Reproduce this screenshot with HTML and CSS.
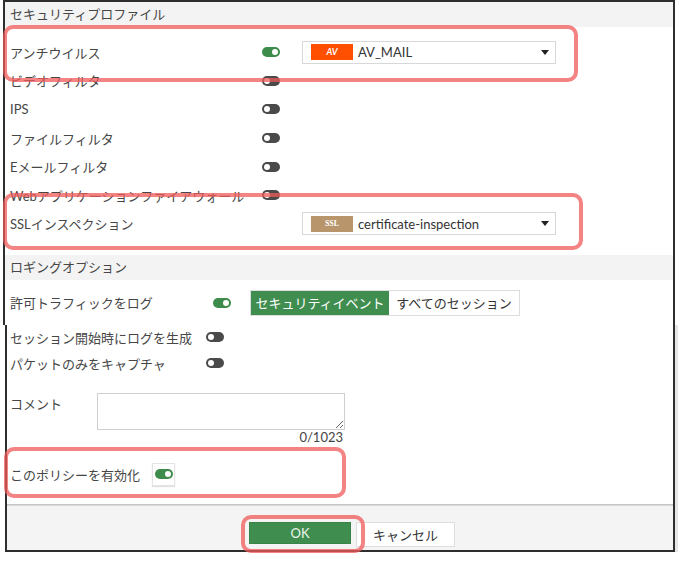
FILE: index.html
```html
<!DOCTYPE html>
<html lang="ja">
<head>
<meta charset="utf-8">
<title>Policy</title>
<link rel="stylesheet" href="styles.css">
</head>
<body>
<div class="top">
  <div class="sect-head">セキュリティプロファイル</div>
  <div class="prof">
    <div class="row">
      <span class="label">アンチウイルス</span>
      <span class="tog on"></span>
      <div class="select"><span class="badge av">AV</span><span class="sel-text">AV_MAIL</span><span class="caret"></span></div>
    </div>
    <div class="row"><span class="label">ビデオフィルタ</span><span class="tog"></span></div>
    <div class="row"><span class="label">IPS</span><span class="tog"></span></div>
    <div class="row"><span class="label">ファイルフィルタ</span><span class="tog"></span></div>
    <div class="row"><span class="label">Eメールフィルタ</span><span class="tog"></span></div>
    <div class="row"><span class="label">Webアプリケーションファイアウォール</span><span class="tog"></span></div>
    <div class="row">
      <span class="label">SSLインスペクション</span>
      <span class="tog-space"></span>
      <div class="select"><span class="badge ssl">SSL</span><span class="sel-text">certificate-inspection</span><span class="caret"></span></div>
    </div>
  </div>
  <div class="sect-head">ロギングオプション</div>
  <div class="row log-row">
    <span class="label">許可トラフィックをログ</span>
    <span class="tog on"></span>
    <div class="seg"><span class="seg-item active">セキュリティイベント</span><span class="seg-item">すべてのセッション</span></div>
  </div>
</div>
<div class="bottom">
  <div class="row brow1"><span class="label">セッション開始時にログを生成</span><span class="tog"></span></div>
  <div class="row brow2"><span class="label">パケットのみをキャプチャ</span><span class="tog"></span></div>
  <div class="comment">
    <span class="clabel">コメント</span>
    <textarea class="carea"></textarea>
  </div>
  <div class="counter">0/1023</div>
  <div class="row enable-row">
    <span class="label">このポリシーを有効化</span>
    <span class="tog-box"><span class="tog on"></span></span>
  </div>
  <div class="sep"></div>
  <div class="footer">
    <button class="btn ok">OK</button>
    <button class="btn cancel">キャンセル</button>
  </div>
</div>
<div class="hl hl-av"></div>
<div class="hl hl-ssl"></div>
<div class="hl hl-enable"></div>
<div class="hl hl-ok"></div>
</body>
</html>
```
FILE: styles.css
```css
* { box-sizing: border-box; }
body {
  margin: 0;
  width: 681px;
  height: 561px;
  overflow: hidden;
  position: relative;
  background: #fff;
  font-family: Lato, "Noto Sans CJK JP", sans-serif;
  font-size: 13px;
  color: #464646;
}
.top {
  margin-left: 3px;
  width: 672px;
  height: 325px;
  border: 2px solid #2e2e2e;
  border-bottom: none;
}
.sect-head {
  height: 25px;
  line-height: 25px;
  padding-left: 5px;
  background: #f3f3f3;
}
.prof {
  height: 228px;
  padding-top: 11px;
}
.row {
  display: flex;
  align-items: center;
  height: 28.6px;
  padding-left: 5px;
  white-space: nowrap;
}
.prof .label { width: 252px; }
.tog {
  position: relative;
  display: inline-block;
  width: 18px;
  height: 10px;
  border-radius: 5px;
  background: #4a4a4a;
  flex: none;
}
.tog::after {
  content: "";
  position: absolute;
  top: 2px;
  left: 2px;
  width: 6px;
  height: 6px;
  border-radius: 50%;
  background: #fff;
}
.tog.on { background: #3d8c4b; }
.tog.on::after { left: 10px; }
.tog-space { width: 18px; flex: none; }
.select {
  margin-left: 22px;
  width: 254px;
  height: 23px;
  border: 1px solid #d8d8d8;
  display: flex;
  align-items: center;
  padding-left: 8px;
}
.badge {
  width: 42px;
  height: 16px;
  line-height: 16px;
  text-align: center;
  color: #fff;
  font-size: 9px;
  margin-right: 5px;
}
.badge.av { background: #ff4f00; font-style: italic; font-weight: bold; }
.badge.ssl { background: #b8956a; font-family: "Liberation Serif", serif; font-size: 8px; font-weight: bold; }
.sel-text { color: #333; }
.caret {
  margin-left: auto;
  margin-right: 6px;
  width: 0;
  height: 0;
  border-left: 4px solid transparent;
  border-right: 4px solid transparent;
  border-top: 5px solid #222;
}
.log-row { height: 45px; }
.log-row .label { width: 203px; }
.seg {
  margin-left: 19px;
  display: flex;
  height: 26px;
  border: 1px solid #ddd;
}
.seg-item {
  display: flex;
  align-items: center;
  justify-content: center;
  width: 130px;
  background: #fff;
  color: #333;
}
.seg-item.active {
  width: 138px;
  background: #3f8e4f;
  color: #fff;
}
.bottom {
  margin-left: 5px;
  width: 670px;
  height: 227px;
  border: 2px solid #2e2e2e;
  border-top: none;
  display: flex;
  flex-direction: column;
  box-shadow: 3px 0 0 #e6e6e6;
}
.bottom .row { padding-left: 3px; }
.brow1 { height: 24px; }
.brow2 { height: 28px; }
.bottom .brow1 .label, .bottom .brow2 .label { width: 196px; }
.comment {
  display: flex;
  margin-top: 16px;
  padding-left: 3px;
  height: 37px;
}
.clabel { width: 87px; line-height: 22px; }
.carea {
  display: block;
  width: 248px;
  height: 37px;
  border: 1px solid #cfcfcf;
  margin: 0;
  padding: 2px;
  resize: both;
}
.counter {
  width: 336px;
  height: 15px;
  line-height: 15px;
  text-align: right;
  color: #444;
}
.enable-row { margin-top: 17px; height: 24px; }
.enable-row .label { width: 142px; }
.tog-box {
  width: 23px;
  height: 23px;
  display: flex;
  align-items: center;
  justify-content: center;
  background: #fff;
  border: 1px solid #e4e4e4;
  box-shadow: 0 1px 1px rgba(0,0,0,0.12);
}
.sep {
  margin-top: 18px;
  height: 2px;
  background: linear-gradient(#bdbdbd, #e2e2e2);
  flex: none;
}
.footer {
  flex: 1;
  background: #f4f4f4;
  padding: 16px 0 0 242px;
  display: flex;
  align-items: flex-start;
}
.btn {
  font-family: Lato, "Noto Sans CJK JP", sans-serif;
  font-size: 13px;
  margin: 0;
  padding: 0;
  cursor: pointer;
}
.btn.ok {
  width: 102px;
  height: 22px;
  background: #3f8e4f;
  color: #eef5ee;
  border: 1px solid #3a8448;
}
.btn.cancel {
  margin-left: 5px;
  width: 99px;
  height: 25px;
  background: #fff;
  color: #333;
  border: 1px solid #dedede;
}
.hl {
  position: absolute;
  border: 4px solid rgba(240, 90, 90, 0.75);
  border-radius: 10px;
  pointer-events: none;
}
.hl-av { left: 3px; top: 25px; width: 575px; height: 57px; }
.hl-ssl { left: 3px; top: 193px; width: 580px; height: 57px; }
.hl-enable { left: 4px; top: 447px; width: 342px; height: 51px; }
.hl-ok { left: 241px; top: 515px; width: 124px; height: 38px; }
```
